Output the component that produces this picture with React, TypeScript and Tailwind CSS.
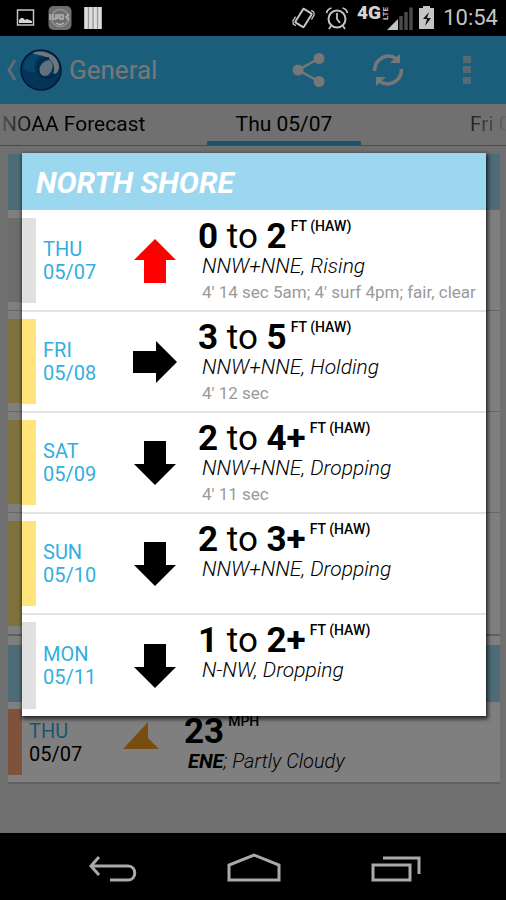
import type { ReactNode } from 'react';

type Dir = 'up' | 'right' | 'down';

interface Day {
  day: string;
  date: string;
  low: string;
  high: string;
  wind: string;
  note?: string;
  dir: Dir;
  bar: string;
}

const days: Day[] = [
  { day: 'THU', date: '05/07', low: '0', high: '2', wind: 'NNW+NNE, Rising', note: "4' 14 sec 5am; 4' surf 4pm; fair, clear", dir: 'up', bar: 'bg-[#e0e0e0]' },
  { day: 'FRI', date: '05/08', low: '3', high: '5', wind: 'NNW+NNE, Holding', note: "4' 12 sec", dir: 'right', bar: 'bg-[#ffe47b]' },
  { day: 'SAT', date: '05/09', low: '2', high: '4+', wind: 'NNW+NNE, Dropping', note: "4' 11 sec", dir: 'down', bar: 'bg-[#ffe47b]' },
  { day: 'SUN', date: '05/10', low: '2', high: '3+', wind: 'NNW+NNE, Dropping', dir: 'down', bar: 'bg-[#ffe47b]' },
  { day: 'MON', date: '05/11', low: '1', high: '2+', wind: 'N-NW, Dropping', dir: 'down', bar: 'bg-[#e0e0e0]' },
];

function Arrow({ dir }: { dir: Dir }) {
  const points = {
    up: '22,0 43,21 33,21 33,44 11,44 11,21 1,21',
    right: '0,11 23,11 23,1 44,22 23,43 23,33 0,33',
    down: '11,0 33,0 33,23 43,23 22,44 1,23 11,23',
  }[dir];
  return (
    <svg width="44" height="44" viewBox="0 0 44 44" className={dir === 'up' ? 'fill-[#ff0000]' : 'fill-black'} aria-hidden="true">
      <polygon points={points} />
    </svg>
  );
}

function ForecastRow({ item }: { item: Day }) {
  return (
    <li className="flex h-[101px] border-b-2 border-[#e4e4e4] last:border-b-0">
      <span className={`my-[7px] w-3.5 shrink-0 ${item.bar}`} />
      <div className="flex w-[97px] shrink-0 flex-col justify-center pl-[7px] text-xl leading-[23px] text-[#33aee2]">
        <span>{item.day}</span>
        <span>{item.date}</span>
      </div>
      <div className="flex w-[65px] shrink-0 items-center">
        <Arrow dir={item.dir} />
      </div>
      <div className="min-w-0 flex-1 whitespace-nowrap">
        <p className="flex gap-1 pt-2 text-[35px] leading-9">
          <span>
            <b>{item.low}</b> to <b>{item.high}</b>
          </span>
          <span className="text-sm leading-[14px] font-medium">FT (HAW)</span>
        </p>
        <p className="pl-1 text-[21px] leading-[23px] font-light italic">{item.wind}</p>
        {item.note && <p className="pl-1 text-[17px] leading-7 text-[#9a9a9a]">{item.note}</p>}
      </div>
    </li>
  );
}

function StatusBar() {
  return (
    <header className="flex h-9 items-center justify-between bg-black pr-2 pl-4 text-[#c4c4c4]">
      <div className="flex items-center gap-3">
        <svg width="20" height="20" viewBox="0 0 20 20" aria-hidden="true">
          <rect x="1.5" y="2" width="16" height="15" fill="none" stroke="#c4c4c4" strokeWidth="1.5" />
          <path d="M3 15v-3l2-2h2l2 2 2-1 5 2v2z" fill="#d4d4d4" />
        </svg>
        <svg width="24" height="26" viewBox="0 0 24 26" aria-hidden="true">
          <rect x="0.5" y="1" width="23" height="24" rx="5" fill="#6e6e6e" />
          <circle cx="12" cy="13" r="8.5" fill="none" stroke="#929292" strokeWidth="1.5" />
          <path d="M2 9v6M5 9v5h3V9M10 9v5M12 10h3v4h-3zM21 9l-3 3 3 3M8 18q4 3 8 0" fill="none" stroke="#b5b5b5" strokeWidth="1.5" />
        </svg>
        <svg width="18" height="22" viewBox="0 0 18 22" aria-hidden="true">
          <rect width="18" height="22" fill="#999" />
          <path d="M2.200 0v22M6.700 0v22M11.300 0v22M15.800 0v22" stroke="#ddd" strokeWidth="3.200" />
        </svg>
      </div>
      <div className="flex items-center">
        <svg width="151" height="30" viewBox="0 0 151 30" fill="none" stroke="#c4c4c4" aria-hidden="true">
          <g transform="rotate(32 19.5 15)">
            <rect x="14.5" y="7" width="10" height="16" rx="1" strokeWidth="2" />
            <path d="M12 18v5l2 2.500h3M27 12V7l-2-2.500h-3" strokeWidth="1.300" />
          </g>
          <circle cx="53" cy="16" r="8.500" strokeWidth="2" />
          <path d="M53 10v6l3 4M42.500 10q1-4 5-5M63.500 10q-1-4-5-5M47 23l-2 3M59 23l2 3" strokeWidth="1.800" />
          <path d="M103 27l11-11v11z" fill="#c4c4c4" stroke="none" />
          <path d="M117 27V13M122 27V9M127 27V4.500" stroke="#4a4a4a" strokeWidth="3.500" />
          <path d="M135 5h4V3h7v2h4v21h-15z" fill="#c4c4c4" stroke="none" />
          <path d="M145 9l-6 7h4l-2 7 6-8h-4z" fill="#111" stroke="none" />
          <text x="73" y="16" className="font-['Roboto'] text-[19px] font-black" fill="#d4d4d4" stroke="none">4G</text>
          <text x="0" y="0" transform="translate(104 17) rotate(-90)" className="font-['Roboto'] text-[8px] font-bold" fill="#c4c4c4" stroke="none">LTE</text>
        </svg>
        <time className="ml-2 text-[22px] leading-9">10:54</time>
      </div>
    </header>
  );
}

function IconButton({ label, children }: { label: string; children: ReactNode }) {
  return (
    <button type="button" aria-label={label} className="flex h-full w-[79px] items-center justify-center">
      {children}
    </button>
  );
}

function ActionBar() {
  return (
    <div className="flex h-[68px] items-center bg-[#36bcf8] pl-1.5 text-[#eeeeee]">
      <button type="button" className="flex items-center text-[26px]">
        <svg width="14" height="24" viewBox="0 0 14 24" fill="none" stroke="#b8dcec" strokeWidth="3" aria-hidden="true">
          <path d="M9 2L3 12l6 10" />
        </svg>
        <svg width="42" height="42" viewBox="0 0 42 42" aria-hidden="true">
          <circle cx="21" cy="21" r="20" fill="#0869b0" />
          <path d="M3 16C7 5 18 1 27 4C18 5 13 13 15 23C8 24 3 21 3 16z" fill="#0e8cd4" />
          <path d="M12 4C26-1 40 8 39 19C38 23 36 25 33 26C36 18 33 11 26 8C21 6 17 6 12 4z" fill="#dcecff" />
          <path d="M30 11C34 15 33 20 30 24C27 28 22 28 20 24C18 18 22 12 30 11z" fill="#c4e4fa" />
          <path d="M29 9C20 9 16 17 19 24C21 29 29 31 35 25" fill="none" stroke="#0a4f92" strokeWidth="2" />
          <circle cx="21" cy="21" r="20" fill="none" stroke="#11306e" strokeWidth="1.500" />
        </svg>
        <span className="pl-[7px]">General</span>
      </button>
      <div className="ml-auto flex h-full">
        <IconButton label="Share">
          <svg width="34" height="36" viewBox="0 0 34 36" fill="#eee" stroke="#eee" aria-hidden="true">
            <path d="M27 6.500L6 18l21 11.500" fill="none" strokeWidth="2.500" />
            <circle cx="27" cy="6.500" r="5.500" stroke="none" />
            <circle cx="6" cy="18" r="5.500" stroke="none" />
            <circle cx="27" cy="29.500" r="5.500" stroke="none" />
          </svg>
        </IconButton>
        <IconButton label="Refresh">
          <svg width="34" height="36" viewBox="0 0 34 36" fill="none" stroke="#eee" strokeWidth="3.500" aria-hidden="true">
            <path d="M3.500 19C3.500 7 16 0 26 7M30.500 17C30.500 29 18 36 8 29" />
            <path d="M29 2v9H19zM5 34v-9h10z" fill="#eee" stroke="none" />
          </svg>
        </IconButton>
        <IconButton label="More options">
          <svg width="8" height="30" viewBox="0 0 8 30" fill="#a9d7eb" aria-hidden="true">
            <path d="M0 1h8v7H0zM0 11h8v7H0zM0 22h8v7H0z" />
          </svg>
        </IconButton>
      </div>
    </div>
  );
}

function Tabs() {
  return (
    <nav className="flex h-[42px] overflow-hidden border-b border-[#4eaed4] bg-[#e0e0e0] text-[21px] whitespace-nowrap">
      <button type="button" className="w-[207px] shrink-0 bg-gradient-to-r from-[#b5b5b5] to-black to-20% bg-clip-text pl-0.5 text-left text-transparent">
        NOAA Forecast
      </button>
      <button type="button" className="w-[154px] shrink-0 border-b-4 border-[#36a9d8] pt-1">Thu 05/07</button>
      <button type="button" className="ml-auto w-9 shrink-0 overflow-hidden bg-gradient-to-r from-[#444] to-[#d0d0d0] bg-clip-text text-left text-transparent">
        Fri 05/08
      </button>
    </nav>
  );
}

function Page() {
  return (
    <>
      <ActionBar />
      <Tabs />
      <section className="mt-2 mr-1.5 ml-2 border-b-2 border-[#c0c0c0] bg-white">
        <div className="h-14 bg-[#9bd8f0]" />
        <div className="flex h-[101px] border-b border-[#cfcfcf] py-2"><span className="w-3.5 bg-[#d8d8d8]" /></div>
        <div className="flex h-[101px] border-b border-[#cfcfcf] py-2"><span className="w-3.5 bg-[#ffe47b]" /></div>
        <div className="flex h-[101px] border-b border-[#cfcfcf] py-2"><span className="w-3.5 bg-[#ffe47b]" /></div>
        <div className="flex h-[123px] border-b-2 border-[#bfbfbf] py-2"><span className="w-3.5 bg-[#ffe47b]" /></div>
        <div className="mt-[9px] h-[57px] bg-[#9bd8f0]" />
        <div className="flex h-20">
          <span className="my-[7px] w-3.5 shrink-0 bg-[#ffa578]" />
          <div className="w-[94px] pt-[18px] pl-[7px] text-xl leading-[23px]">
            <p className="text-[#33aee2]">THU</p>
            <p>05/07</p>
          </div>
          <svg width="36" height="28" viewBox="0 0 36 28" className="mt-5 ml-[7px]" aria-hidden="true">
            <path d="M25 0v16l11 11H0z" fill="#f39a1c" />
          </svg>
          <div className="ml-[25px] whitespace-nowrap">
            <p className="flex gap-1 pt-3 text-[35px] leading-9">
              <b>23</b>
              <span className="text-sm leading-[14px] font-medium">MPH</span>
            </p>
            <p className="pl-1 text-xl leading-[23px] font-light italic"><b className="font-bold">ENE</b>; Partly Cloudy</p>
          </div>
        </div>
      </section>
    </>
  );
}

function NavBar() {
  return (
    <footer className="flex h-[67px] items-center justify-center gap-[85px] bg-black pt-1">
      <button type="button" aria-label="Back">
        <svg width="56" height="32" viewBox="0 0 56 32" fill="none" stroke="#aaa" strokeWidth="3" aria-hidden="true">
          <path d="M8 13h36c9 0 9 14 0 14H26M15 4l-8 9 8 9" />
        </svg>
      </button>
      <button type="button" aria-label="Home">
        <svg width="56" height="32" viewBox="0 0 56 32" fill="none" stroke="#aaa" strokeWidth="3" aria-hidden="true">
          <path d="M4 27V12L29 2l25 10v15z" />
        </svg>
      </button>
      <button type="button" aria-label="Recent apps">
        <svg width="56" height="32" viewBox="0 0 56 32" fill="none" stroke="#aaa" strokeWidth="3" aria-hidden="true">
          <path d="M7 12h37v15H7zM17 5h36v16" />
        </svg>
      </button>
    </footer>
  );
}

export default function App() {
  return (
    <div className="flex min-h-screen flex-col bg-black font-['Roboto','Liberation_Sans',sans-serif] text-black">
      <StatusBar />
      <main className="relative flex-1 bg-[#dedede]">
        <Page />
        <div className="absolute inset-0 flex items-center justify-center bg-black/50 pr-5 pl-[22px]">
          <section role="dialog" aria-labelledby="dialog-title" className="w-full bg-white shadow-[1px_2px_4px_1px_rgba(0,0,0,0.7)]">
            <h2 id="dialog-title" className="flex h-[57px] items-center bg-[#9bd8f0] pt-0.5 pl-3.5 text-[30px] font-bold text-white italic">
              NORTH SHORE
            </h2>
            <ul className="pt-px">
              {days.map((d) => (
                <ForecastRow key={d.date} item={d} />
              ))}
            </ul>
          </section>
        </div>
      </main>
      <NavBar />
    </div>
  );
}
